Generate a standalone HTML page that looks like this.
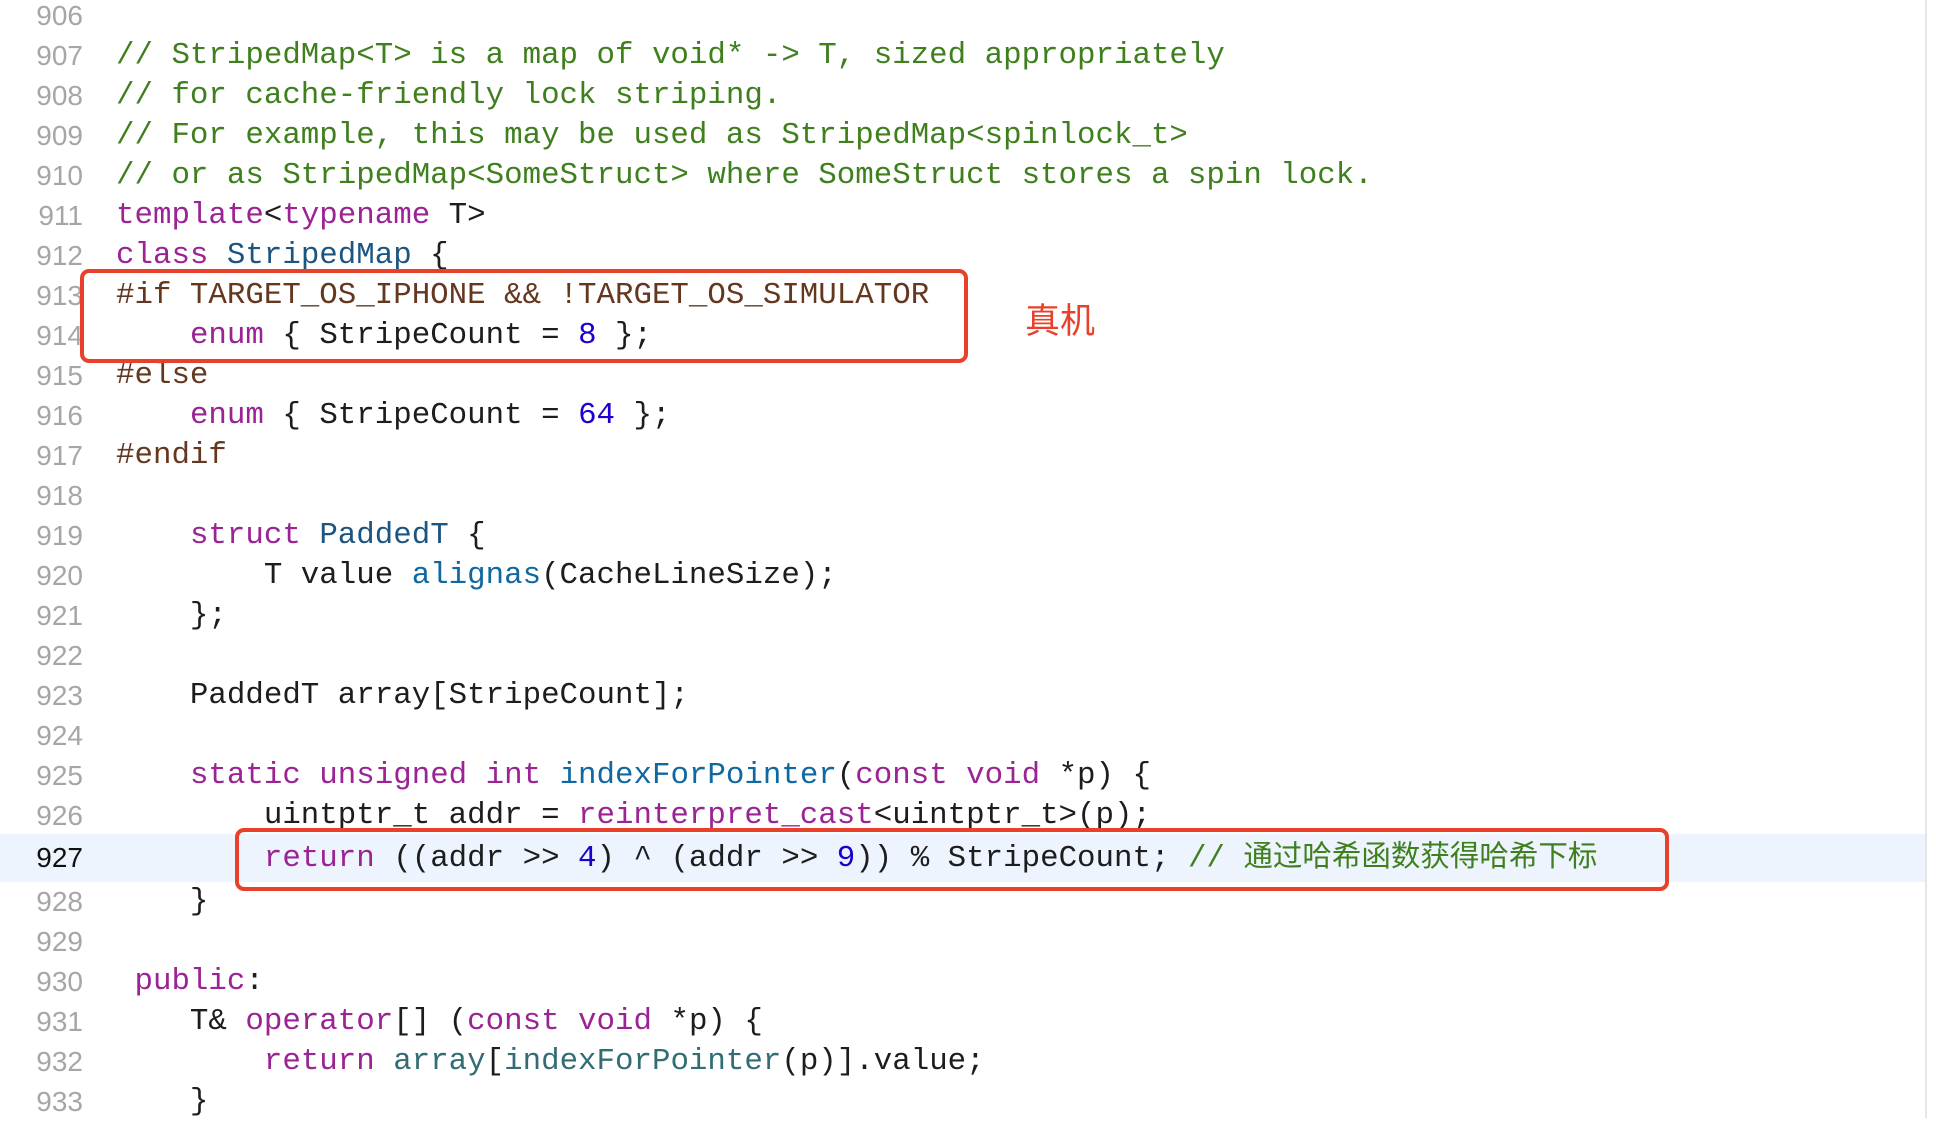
<!DOCTYPE html>
<html><head><meta charset="utf-8"><style>
body{margin:0;width:1936px;height:1118px;background:#fff;overflow:hidden;position:relative}
.l{position:absolute;left:0;height:40px;width:1925px}
.n{position:absolute;right:1853px;top:0;line-height:40px;font-family:"Liberation Sans",sans-serif;font-size:28px;color:#a6a6a6;transform:translateX(11px)}
.c{position:absolute;left:116px;top:0;line-height:40px;font-family:"Liberation Mono","Noto Sans CJK SC",monospace;font-size:30.8px;color:#1d1d1d;white-space:pre}
.cm{color:#3f7f1e}.k{color:#9b2393}.t{color:#1c5580}.p{color:#643820}.d{color:#1c00cf}.f{color:#0f68a0}.g{color:#326d74}
.box{position:absolute;border:4px solid #e8402a;border-radius:9px;box-sizing:border-box}
</style></head><body>
<div style="position:absolute;left:0;top:834px;width:1926px;height:48px;background:#edf4fd"></div>
<div style="position:absolute;left:1925px;top:0;width:2px;height:1118px;background:#e6e6e6"></div>
<div class="l" style="top:-4px"><span class="n">906</span><span class="c"></span></div>
<div class="l" style="top:36px"><span class="n">907</span><span class="c cm">// StripedMap&lt;T&gt; is a map of void* -&gt; T, sized appropriately</span></div>
<div class="l" style="top:76px"><span class="n">908</span><span class="c cm">// for cache-friendly lock striping.</span></div>
<div class="l" style="top:116px"><span class="n">909</span><span class="c cm">// For example, this may be used as StripedMap&lt;spinlock_t&gt;</span></div>
<div class="l" style="top:156px"><span class="n">910</span><span class="c cm">// or as StripedMap&lt;SomeStruct&gt; where SomeStruct stores a spin lock.</span></div>
<div class="l" style="top:196px"><span class="n">911</span><span class="c"><span class="k">template</span>&lt;<span class="k">typename</span> T&gt;</span></div>
<div class="l" style="top:236px"><span class="n">912</span><span class="c"><span class="k">class</span> <span class="t">StripedMap</span> {</span></div>
<div class="l" style="top:276px"><span class="n">913</span><span class="c p">#if TARGET_OS_IPHONE &amp;&amp; !TARGET_OS_SIMULATOR</span></div>
<div class="l" style="top:316px"><span class="n">914</span><span class="c">    <span class="k">enum</span> { StripeCount = <span class="d">8</span> };</span></div>
<div class="l" style="top:356px"><span class="n">915</span><span class="c p">#else</span></div>
<div class="l" style="top:396px"><span class="n">916</span><span class="c">    <span class="k">enum</span> { StripeCount = <span class="d">64</span> };</span></div>
<div class="l" style="top:436px"><span class="n">917</span><span class="c p">#endif</span></div>
<div class="l" style="top:476px"><span class="n">918</span><span class="c"></span></div>
<div class="l" style="top:516px"><span class="n">919</span><span class="c">    <span class="k">struct</span> <span class="t">PaddedT</span> {</span></div>
<div class="l" style="top:556px"><span class="n">920</span><span class="c">        T value <span class="f">alignas</span>(CacheLineSize);</span></div>
<div class="l" style="top:596px"><span class="n">921</span><span class="c">    };</span></div>
<div class="l" style="top:636px"><span class="n">922</span><span class="c"></span></div>
<div class="l" style="top:676px"><span class="n">923</span><span class="c">    PaddedT array[StripeCount];</span></div>
<div class="l" style="top:716px"><span class="n">924</span><span class="c"></span></div>
<div class="l" style="top:756px"><span class="n">925</span><span class="c">    <span class="k">static unsigned int</span> <span class="f">indexForPointer</span>(<span class="k">const void</span> *p) {</span></div>
<div class="l" style="top:796px"><span class="n">926</span><span class="c">        uintptr_t addr = <span class="k">reinterpret_cast</span>&lt;uintptr_t&gt;(p);</span></div>
<div class="l" style="top:838px"><span class="n" style="color:#111">927</span><span class="c">        <span class="k">return</span> ((addr &gt;&gt; <span class="d">4</span>) ^ (addr &gt;&gt; <span class="d">9</span>)) % StripeCount; <span class="cm">// <span style="font-size:29.5px">通过哈希函数获得哈希下标</span></span></span></div>
<div class="l" style="top:882px"><span class="n">928</span><span class="c">    }</span></div>
<div class="l" style="top:922px"><span class="n">929</span><span class="c"></span></div>
<div class="l" style="top:962px"><span class="n">930</span><span class="c"> <span class="k">public</span>:</span></div>
<div class="l" style="top:1002px"><span class="n">931</span><span class="c">    T&amp; <span class="k">operator</span>[] (<span class="k">const void</span> *p) {</span></div>
<div class="l" style="top:1042px"><span class="n">932</span><span class="c">        <span class="k">return</span> <span class="g">array</span>[<span class="g">indexForPointer</span>(p)].value;</span></div>
<div class="l" style="top:1082px"><span class="n">933</span><span class="c">    }</span></div>
<div class="box" style="left:80px;top:269px;width:888px;height:94px"></div>
<div class="box" style="left:235px;top:828px;width:1434px;height:63px"></div>
<div style="position:absolute;left:1025px;top:298px;font-family:'Noto Sans CJK SC',sans-serif;font-size:35px;line-height:42px;color:#e8402a">真机</div>
</body></html>
